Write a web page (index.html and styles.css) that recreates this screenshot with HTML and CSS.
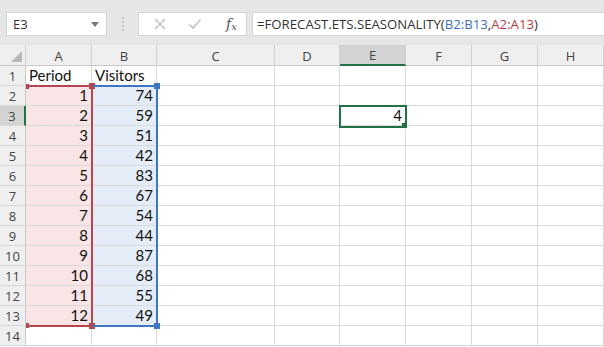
FILE: index.html
```html
<!DOCTYPE html>
<html>
<head>
<meta charset="utf-8">
<link rel="stylesheet" href="styles.css">
</head>
<body>
<div class="app">
  <div class="toolbar">
    <div class="namebox">
      <span class="name">E3</span>
      <svg class="dd" width="8" height="5" viewBox="0 0 8 5"><path d="M0 0H8L4 5Z" fill="#7a7a7a"/></svg>
    </div>
    <div class="grip"><i></i><i></i><i></i><i></i></div>
    <div class="fxbtns">
      <svg class="ico" width="14" height="14" viewBox="0 0 14 14"><path d="M2 2L12 12M12 2L2 12" stroke="#c2c2c2" stroke-width="1.6" fill="none"/></svg>
      <svg class="ico" width="14" height="14" viewBox="0 0 14 14"><path d="M1.5 7.5L5 11L12.5 2.5" stroke="#c2c2c2" stroke-width="1.6" fill="none"/></svg>
      <span class="fx">f<sub>x</sub></span>
    </div>
    <div class="formula">=FORECAST.ETS.SEASONALITY(<span class="rb">B2:B13</span>,<span class="ra">A2:A13</span>)</div>
  </div>
  <div class="sheet">
    <div class="grid">
      <div class="hd corner"><svg class="tri" width="11" height="11" viewBox="0 0 11 11"><path d="M11 0V11H0Z" fill="#b9b9b9"/></svg></div>
      <div class="hd col">A</div><div class="hd col">B</div><div class="hd col">C</div><div class="hd col">D</div><div class="hd col sel">E</div><div class="hd col">F</div><div class="hd col">G</div><div class="hd col">H</div>

      <div class="hd row">1</div><div class="c">Period</div><div class="c">Visitors</div><div class="c"></div><div class="c"></div><div class="c"></div><div class="c"></div><div class="c"></div><div class="c"></div>
      <div class="hd row">2</div><div class="c n ra-f">1</div><div class="c n rb-f">74</div><div class="c"></div><div class="c"></div><div class="c"></div><div class="c"></div><div class="c"></div><div class="c"></div>
      <div class="hd row rsel">3</div><div class="c n ra-f">2</div><div class="c n rb-f">59</div><div class="c"></div><div class="c"></div><div class="c n">4</div><div class="c"></div><div class="c"></div><div class="c"></div>
      <div class="hd row">4</div><div class="c n ra-f">3</div><div class="c n rb-f">51</div><div class="c"></div><div class="c"></div><div class="c"></div><div class="c"></div><div class="c"></div><div class="c"></div>
      <div class="hd row">5</div><div class="c n ra-f">4</div><div class="c n rb-f">42</div><div class="c"></div><div class="c"></div><div class="c"></div><div class="c"></div><div class="c"></div><div class="c"></div>
      <div class="hd row">6</div><div class="c n ra-f">5</div><div class="c n rb-f">83</div><div class="c"></div><div class="c"></div><div class="c"></div><div class="c"></div><div class="c"></div><div class="c"></div>
      <div class="hd row">7</div><div class="c n ra-f">6</div><div class="c n rb-f">67</div><div class="c"></div><div class="c"></div><div class="c"></div><div class="c"></div><div class="c"></div><div class="c"></div>
      <div class="hd row">8</div><div class="c n ra-f">7</div><div class="c n rb-f">54</div><div class="c"></div><div class="c"></div><div class="c"></div><div class="c"></div><div class="c"></div><div class="c"></div>
      <div class="hd row">9</div><div class="c n ra-f">8</div><div class="c n rb-f">44</div><div class="c"></div><div class="c"></div><div class="c"></div><div class="c"></div><div class="c"></div><div class="c"></div>
      <div class="hd row">10</div><div class="c n ra-f">9</div><div class="c n rb-f">87</div><div class="c"></div><div class="c"></div><div class="c"></div><div class="c"></div><div class="c"></div><div class="c"></div>
      <div class="hd row">11</div><div class="c n ra-f">10</div><div class="c n rb-f">68</div><div class="c"></div><div class="c"></div><div class="c"></div><div class="c"></div><div class="c"></div><div class="c"></div>
      <div class="hd row">12</div><div class="c n ra-f">11</div><div class="c n rb-f">55</div><div class="c"></div><div class="c"></div><div class="c"></div><div class="c"></div><div class="c"></div><div class="c"></div>
      <div class="hd row">13</div><div class="c n ra-f">12</div><div class="c n rb-f">49</div><div class="c"></div><div class="c"></div><div class="c"></div><div class="c"></div><div class="c"></div><div class="c"></div>
      <div class="hd row">14</div><div class="c"></div><div class="c"></div><div class="c"></div><div class="c"></div><div class="c"></div><div class="c"></div><div class="c"></div><div class="c"></div>
    </div>
    <div class="range range-a"><i class="h tl"></i><i class="h tr"></i><i class="h bl"></i><i class="h br"></i></div>
    <div class="range range-b"><i class="h tr"></i><i class="h br"></i></div>
    <div class="active"><i class="handle"></i></div>
  </div>
</div>
</body>
</html>
```

FILE: styles.css
```css
* { box-sizing: border-box; }
html, body { margin: 0; padding: 0; background: #ffffff; }
body { width: 604px; height: 347px; overflow: hidden; font-family: "Lato", "Open Sans", sans-serif; }

.app { width: 604px; }

.toolbar {
  height: 45px;
  background: #e6e6e6;
  display: flex;
  align-items: flex-start;
  padding: 12px 0 0 6px;
}
.namebox {
  width: 101px;
  height: 24px;
  background: #fff;
  border: 1px solid #d4d4d4;
  display: flex;
  align-items: center;
  justify-content: space-between;
  padding: 0 7px 0 6px;
  font-family: "Open Sans", "Lato", sans-serif;
  font-size: 13px;
  color: #333;
}
.dd { margin-top: 1px; }
.grip {
  width: 31px;
  height: 24px;
  display: flex;
  flex-direction: column;
  align-items: center;
  justify-content: center;
  gap: 2px;
}
.grip i { display: block; width: 2px; height: 2px; background: #c4c4c4; }
.fxbtns {
  width: 109px;
  height: 24px;
  background: #fff;
  border: 1px solid #d4d4d4;
  display: flex;
  align-items: center;
  padding-left: 14px;
  gap: 21px;
}
.fx {
  font-family: "DejaVu Serif", "Liberation Serif", serif;
  font-style: italic;
  font-size: 14px;
  color: #555;
  margin-left: 3px;
  line-height: 1;
}
.fx sub { font-size: 10px; vertical-align: -1px; }
.formula {
  flex: 1;
  margin-left: 5px;
  height: 24px;
  background: #fff;
  border: 1px solid #d4d4d4;
  border-right: none;
  padding-left: 4px;
  font-family: "Open Sans", "Lato", sans-serif;
  font-size: 13.2px;
  line-height: 22px;
  color: #333;
  white-space: nowrap;
}
.rb { color: #3d6fc2; }
.ra { color: #bb3a48; }

.sheet { position: relative; }
.grid {
  display: grid;
  grid-template-columns: 26px 66px 65px 118px 65px 66px 66px 66px 66px;
  grid-template-rows: 21px repeat(14, 20px);
}
.hd {
  background: #efefef;
  border-right: 1px solid #d0d0d0;
  border-bottom: 1px solid #c8c8c8;
  color: #444;
  font-family: "Open Sans", "Lato", sans-serif;
  font-size: 13px;
  display: flex;
  align-items: center;
  justify-content: center;
}
.corner { position: relative; align-items: flex-end; justify-content: flex-end; padding: 0 3px 3px 0; }
.hd.col { padding-top: 1px; }
.hd.sel { background: #d3d3d3; border-bottom: 2px solid #217346; color: #3a4a40; }
.hd.row { border-right: 1px solid #c8c8c8; border-bottom: 1px solid #d8d8d8; }
.hd.rsel { background: #d3d3d3; border-right: 2px solid #217346; color: #3a4a40; }

.c {
  border-right: 1px solid #dadada;
  border-bottom: 1px solid #dadada;
  font-size: 15px;
  color: #111;
  padding: 0 3px;
  line-height: 19px;
  white-space: nowrap;
}
.c.n { text-align: right; }
.ra-f { background: #f9e5e6; }
.rb-f { background: #e4ecf7; }

.range { position: absolute; border-style: solid; border-width: 2px 2px 2px 0; }
.range-a { left: 27px; top: 40px; width: 66px; height: 242px; border-color: #b54550; }
.range-b { left: 93px; top: 40px; width: 65px; height: 242px; border-color: #3f76c4; }
.range .h { position: absolute; width: 6px; height: 6px; }
.range-a .h { background: #b54550; }
.range-b .h { background: #3f76c4; }
.range .tr { right: -4px; top: -4px; }
.range .br { right: -4px; bottom: -4px; }
.range .tl { left: -1px; top: -3px; width: 3px; height: 5px; }
.range .bl { left: -1px; bottom: -3px; width: 3px; height: 5px; }

.active {
  position: absolute;
  left: 339px;
  top: 60px;
  width: 68px;
  height: 23px;
  border: 2px solid #217346;
}
.handle {
  position: absolute;
  right: -3px;
  bottom: -3px;
  width: 6px;
  height: 6px;
  background: #217346;
  border: 1px solid #fff;
  border-top: none;
  border-left: none;
}
```
